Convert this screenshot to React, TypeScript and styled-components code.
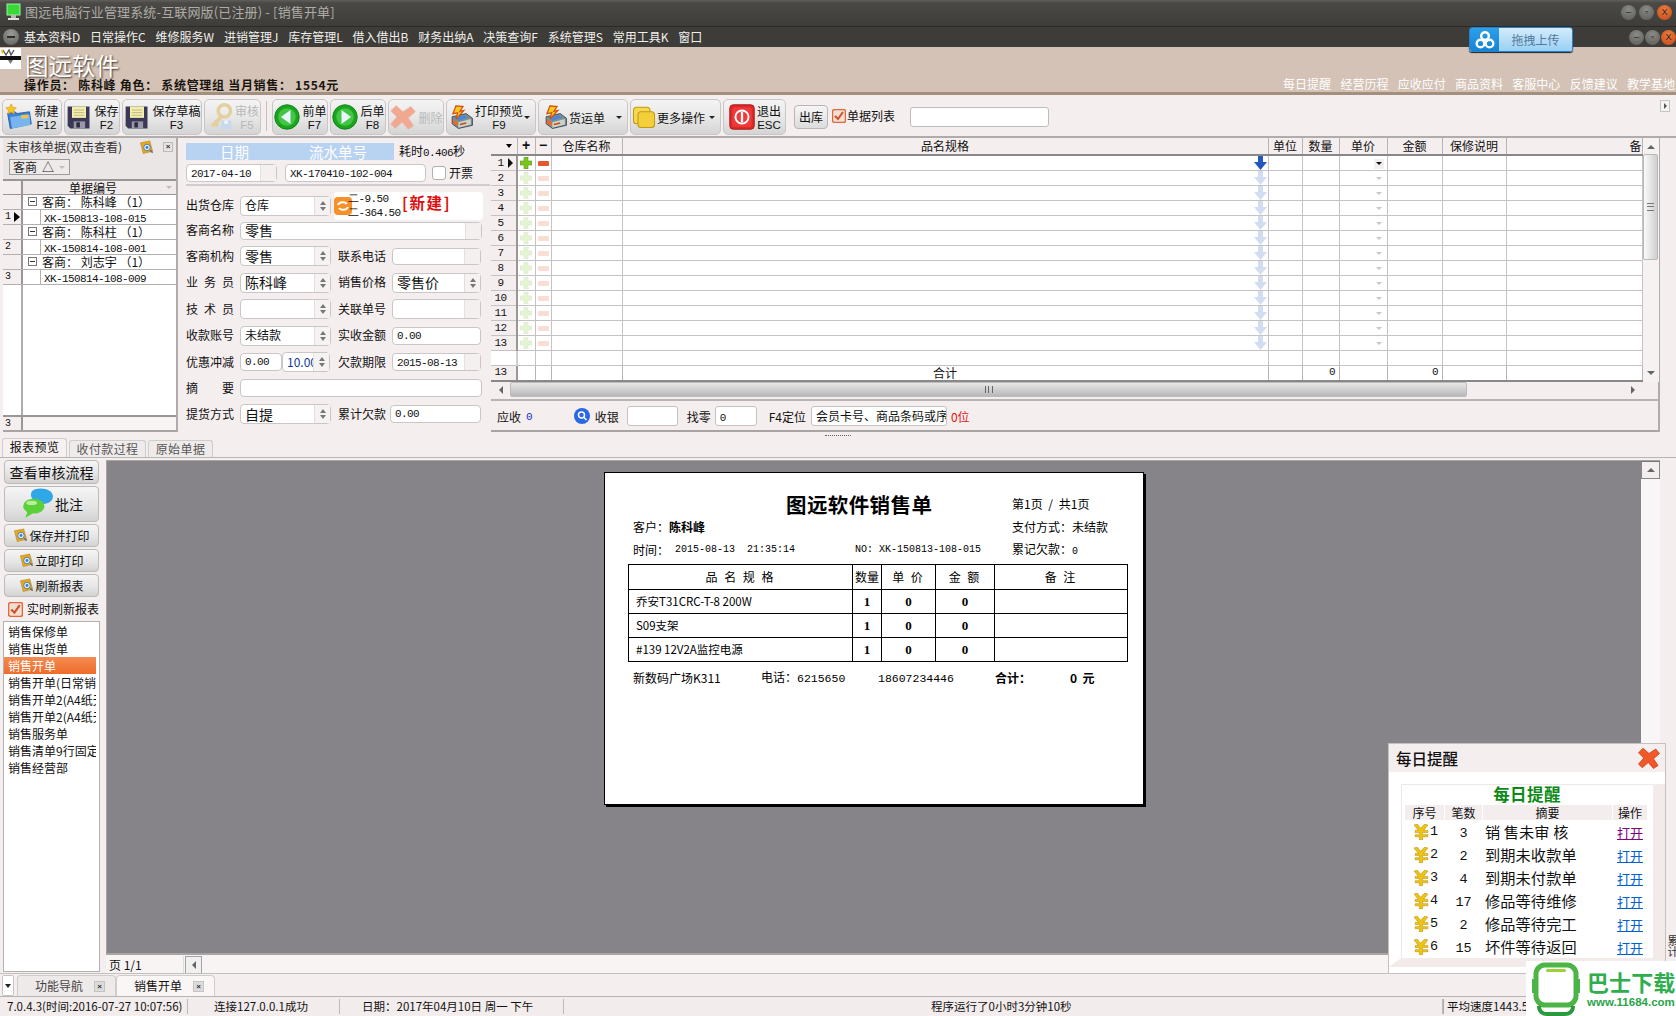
import React from 'react';
import styled, { createGlobalStyle } from 'styled-components';

const CJK = '"Noto Sans CJK SC", "Liberation Sans", sans-serif';
const MONO = '"Liberation Mono", "DejaVu Sans Mono", monospace';
const PANEL = '#f5eeee';

const Global = createGlobalStyle`
  html, body { margin: 0; padding: 0; background: ${PANEL}; }
  * { box-sizing: border-box; }
  body { font: 12px/1.2 ${CJK}; color: #111; }
`;

const Root = styled.div`
  position: relative; width: 1676px; height: 1016px; overflow: hidden;
  display: flex; flex-direction: column; background: ${PANEL};
`;

/* ---------- window chrome ---------- */
const TitleBar = styled.div`
  height: 27px; display: flex; align-items: center; padding: 0 3px 2px 6px; gap: 4px;
  background: linear-gradient(#5f5e5a 0, #4a4946 3px, #3e3d39 100%); border-bottom: 1px solid #2c2b28;
`;
const TitleText = styled.div`flex: 1; color: #aeaca6; font-size: 13px; letter-spacing: 0.15px; white-space: nowrap;`;
const MenuBar = styled.div`
  height: 20px; display: flex; align-items: center; padding: 0 0 0 3px; background: #3d3c38; position: relative;
`;
const MenuDot = styled.span`
  width: 16px; height: 16px; border-radius: 50%; margin-right: 5px;
  background: radial-gradient(circle at 50% 30%, #9a9a96, #5c5c58); display: inline-flex; align-items: center; justify-content: center;
  &::after { content: ''; width: 8px; height: 2px; background: #2e2e2c; }
`;
const MenuItem = styled.span`color: #f1f0ec; font-size: 12px; margin-right: 9.8px; white-space: nowrap;`;
const MenuFill = styled.div`flex: 1;`;
const WinButtons = styled.div<{ $mr: number; $gap: number }>`display: flex; gap: ${(p) => p.$gap}px; margin-right: ${(p) => p.$mr}px;`;
const WinBtn = styled.span<{ $close?: boolean }>`
  width: 15px; height: 15px; border-radius: 50%; color: #26262a; font-size: 9px; display: flex; align-items: center; justify-content: center;
  font-family: "Liberation Sans", sans-serif;
  background: ${(p) => (p.$close ? 'radial-gradient(circle at 50% 30%, #ee7a3c, #c24a1a)' : 'radial-gradient(circle at 50% 30%, #8a8a86, #5a5a56)')};
`;

const Header = styled.div`
  height: 48px; display: flex; justify-content: space-between; background: #d3c2b5;
  border-bottom: 3px solid #a28f7e;
`;
const Logo = styled.div`width: 21px; height: 21px; margin: 1px 3px 0 0; background: #fff;`;
const Brand = styled.div`display: flex; flex-direction: column; flex: 1; padding-top: 5px;`;
const BrandName = styled.div`
  color: #fff; font-size: 23.5px; line-height: 27px; letter-spacing: 0; margin-left: 1px;
  text-shadow: 1px 1px 2px #3a3028;
`;
const Operator = styled.div`font-size: 12px; font-weight: 700; color: #181410; line-height: 14px; margin-top: -1px; letter-spacing: 0.7px;`;
const HeadLeft = styled.div`display: flex;`;
const HeadLinks = styled.div`display: flex; gap: 9.3px; align-items: flex-end; margin: 0 1px -1px 0;`;
const HeadLink = styled.span`color: #fff; font-size: 12px; line-height: 18px;`;

/* ---------- toolbar ---------- */
const Toolbar = styled.div`
  height: 41px; flex: none; display: flex; align-items: flex-start; gap: 2px; padding: 4px 0 0 2px; background: ${PANEL}; position: relative;
`;
const ToolBtn = styled.div<{ $w: number; $off?: boolean; $pl?: number }>`
  width: ${(p) => p.$w}px; height: 36px; flex: none; display: flex; align-items: center; justify-content: ${(p) => (p.$pl !== undefined ? 'flex-start' : 'center')}; gap: 1px;
  padding-left: ${(p) => p.$pl ?? 0}px;
  border: 1px solid #c8c6c6; border-radius: 5px; position: relative;
  background: linear-gradient(#f4f4f4, #e8e8e8 50%, #d4d4d4);
  color: ${(p) => (p.$off ? '#b8b8b8' : '#111')};
`;
const ToolText = styled.div`display: flex; flex-direction: column; align-items: center; line-height: 15px; white-space: nowrap;`;
const ToolKey = styled.span`font: 11.5px/14px "Liberation Sans", sans-serif;`;
const Caret = styled.span`
  position: absolute; right: 5px; top: 16px; width: 0; height: 0;
  border-left: 3px solid transparent; border-right: 3px solid transparent; border-top: 3px solid #222;
`;
const ToolSep = styled.span`width: 1px; height: 30px; background: #c4c0c0; margin: 2px 3px 0;`;
const SmallBtn = styled.div`
  width: 34px; height: 24px; margin: 6px 2px 0 6px; border: 1px solid #b8b6b6; border-radius: 4px; display: flex; align-items: center; justify-content: center;
  background: linear-gradient(#f6f6f6, #dcdcdc); flex: none;
`;
const CheckRow = styled.label`display: flex; align-items: center; gap: 1px; white-space: nowrap;`;
const ToolCheck = styled(CheckRow)`margin-top: 10px;`;
const ToolSearch = styled.div`
  width: 139px; height: 20px; margin: 8px 0 0 13px; background: #fff; border: 1px solid #bdbdbd; border-radius: 3px;
`;
const CornerBtn = styled.span`
  position: absolute; right: 6px; top: 5px; width: 10px; height: 12px; border: 1px solid #c4c4c4; background: #f4f4f4;
  &::after { content: ''; position: absolute; left: 3px; top: 2px; border-left: 3px solid #555; border-top: 3px solid transparent; border-bottom: 3px solid transparent; }
`;

/* ---------- main split ---------- */
const Main = styled.div`height: 296px; display: flex; flex: none; background: ${PANEL}; border-top: 2px solid #b0acac;`;

const LeftPanel = styled.div`
  width: 175px; margin-left: 3px; display: flex; flex-direction: column; height: 294px;
  border-bottom: 2px solid #a8a4a4; border-right: 2px solid #b0acac;
`;
const LeftTitle = styled.div`height: 20px; display: flex; align-items: center; color: #333; padding: 0 3px 2px 3px; background: #ebe6e6;`;
const Grow = styled.span`flex: 1;`;
const TinyClose = styled.span`
  width: 10px; height: 10px; margin-left: 9px; border: 1px solid #bbb; background: #e8e4e4; color: #333; font: 700 8px/8px "Liberation Sans", sans-serif; text-align: center;
`;
const FilterRow = styled.div`height: 21px; padding: 1px 0 0 6px; background: #ebe6e6;`;
const FilterChip = styled.div`
  width: 61px; height: 16px; border: 1px solid #9c9c9c; background: #eeeaea; display: flex; align-items: center; gap: 5px; padding-left: 3px; line-height: 12px;
  color: #222; font-size: 12px; white-space: nowrap;
`;
const GrayTri = styled.span`
  width: 0; height: 0; flex: none; border-left: 3px solid transparent; border-right: 3px solid transparent; border-top: 3px solid #c0bcbc;
`;
const ListHead = styled.div`
  height: 16px; display: flex; border-top: 2px solid #9a9696; border-bottom: 1px solid #9a9696; background: #f0eaea;
  line-height: 13px;
`;
const ListGutter = styled.div`
  width: 20px; flex: none; border-right: 2px solid #9a9696; background: ${PANEL}; font-size: 10px; display: flex; align-items: center; gap: 3px; padding-left: 2px;
  font-family: ${MONO};
`;
const ListHeadText = styled.div`flex: 1; display: flex; align-items: center; padding: 0 4px 0 46px; justify-content: space-between;`;
const TreeRow = styled.div`height: 15px; display: flex; background: #fff; border-bottom: 1px solid #b4b0b0;`;
const TreeBox = styled.span`
  width: 9px; height: 9px; border: 1px solid #777; margin: 2px 5px 0 5px; position: relative; flex: none; background: #fff;
  &::after { content: ''; position: absolute; left: 1px; top: 3px; width: 5px; height: 1px; background: #333; }
`;
const TreeText = styled.span`white-space: nowrap; line-height: 14px; font-size: 12px;`;
const Mono = styled.span<{ $s?: number }>`font: ${(p) => p.$s ?? 11}px/14px ${MONO}; letter-spacing: ${(p) => ((p.$s ?? 11) === 11 ? -0.6 : 0)}px; white-space: nowrap;`;
const TreeItem = styled.div`
  margin-left: 17px; flex: 1; padding-left: 3px; border-left: 1px solid #b4b0b0; line-height: 14px;
`;
const ListFill = styled.div`flex: 1; display: flex; background: #fff;`;
const ListFillGutter = styled.div`width: 20px; border-right: 2px solid #b0acac; background: #fff;`;
const ListFoot = styled.div`
  height: 15px; display: flex; border-top: 2px solid #9a9696; background: #f8f4f4; line-height: 12px; font-size: 10px; font-family: ${MONO};
`;

/* ---------- form ---------- */
const Form = styled.div`width: 297px; margin-left: 8px; padding-top: 5px; flex: none;`;
const BandRow = styled.div`display: flex; align-items: flex-end; gap: 5px; height: 17px;`;
const Band = styled.div`
  width: 208px; height: 17px; background: #b8d2f2; color: #fff; font-size: 14.5px; line-height: 17px; display: flex; padding-left: 34px; gap: 60px;
`;
const Spent = styled.span`white-space: nowrap;`;
const DateRow = styled.div`
  display: flex; gap: 8px; align-items: center; height: 26px; padding-bottom: 1px; border-bottom: 2px solid #d0ccd0; margin-bottom: 7px; padding-top: 3px; width: 304px;
`;
const Field = styled.div<{ $w: number; $h?: number; $fs?: number; $ml?: number }>`
  width: ${(p) => p.$w}px; height: ${(p) => p.$h ?? 19}px; flex: none; background: #fff; border: 1px solid #c8c6c6; border-radius: 4px;
  display: flex; align-items: center; padding-left: 4px; position: relative; white-space: nowrap;
  font-size: ${(p) => p.$fs ?? 12}px; margin-left: ${(p) => p.$ml ?? 0}px;
`;
const FieldText = styled.span`flex: 1; line-height: 1.2;`;
const ClipValue = styled.span`flex: 1; color: #0e3a98; font-size: 12px; line-height: 1.5; overflow: hidden;`;
const Spinner = styled.span`
  width: 16px; align-self: stretch; flex: none; border-left: 1px solid #e0dede; background: #f6f2f2; display: flex; flex-direction: column; align-items: center; justify-content: center; gap: 2px;
  &::before { content: ''; border-left: 3px solid transparent; border-right: 3px solid transparent; border-bottom: 4px solid #777; }
  &::after { content: ''; border-left: 3px solid transparent; border-right: 3px solid transparent; border-top: 4px solid #777; }
`;
const DropCap = styled.span`width: 16px; align-self: stretch; flex: none; border-left: 1px solid #e4e0e0; background: #f4f0f0;`;
const CheckSq = styled.span`width: 14px; height: 14px; flex: none; background: #fff; border: 1px solid #b0aeae; border-radius: 3px; margin-left: -2px;`;
const InvoiceText = styled.span`margin-left: -5px;`;
const FormRow = styled.div<{ $h: number }>`height: ${(p) => p.$h}px; display: flex; align-items: center; position: relative;`;
const Label = styled.span<{ $ml?: number; $w?: number }>`
  width: ${(p) => p.$w ?? 48}px; flex: none; text-align-last: justify; font-size: 12px; margin-left: ${(p) => p.$ml ?? 0}px; margin-right: 6px; white-space: nowrap;
`;
const InfoBox = styled.div`
  width: 149px; height: 28px; margin-left: 3px; background: #fff; border-radius: 4px; display: flex; align-items: center; position: relative; padding-left: 0;
`;
const InfoLines = styled.div`display: flex; flex-direction: column; margin-left: -4px; line-height: 13px; position: relative;`;
const NewTag = styled.span`
  color: #e01010; font-size: 15.5px; font-weight: 700; position: absolute; left: 68px; top: 1px; white-space: nowrap; letter-spacing: 1.6px;
`;

/* ---------- line-item grid ---------- */
const GridColumn = styled.div`width: 1169px; margin-left: 8px; flex: none; border-right: 2px solid #b0acac; height: 294px; display: flex; flex-direction: column;`;
const GridWrap = styled.div`display: flex; height: 244px; flex: none;`;
const GridTable = styled.table`
  border-collapse: collapse; table-layout: fixed; width: 1151px; height: 242px; flex: none; background: #fff;
  th, td { padding: 0; white-space: nowrap; }
  td { overflow: hidden; }
  thead th { height: 17px; font-weight: 400; text-align: center; background: ${PANEL}; border-right: 1px solid #b8b4b4; border-bottom: 2px solid #888; line-height: 15px; font-size: 12px; vertical-align: top; }
  tbody td { height: 15px; border-right: 1px solid #c4c2c2; border-bottom: 1px solid #c4c2c2; line-height: 13px; position: relative; }
  tfoot td { height: 15px; border-right: 1px solid #b8b4b4; border-top: 1px solid #888; border-bottom: 2px solid #888; line-height: 13px; background: #fff; text-align: center; overflow: visible; }
`;
const HeadSort = styled.svg`display: block; margin-left: 14px;`;
const HeadSign = styled.th`&& { font: 700 14px/15px "Liberation Sans", sans-serif; }`;
const HeadRight = styled.th`&& { text-align: right; overflow: hidden; }`;
const RowNum = styled.td<{ $blank?: boolean }>`
  && { background: ${(p) => (p.$blank ? '#fff' : PANEL)}; border-right: 2px solid ${(p) => (p.$blank ? '#d0d0d0' : '#9a9696')}; font: 11px/13px ${MONO}; text-align: center; letter-spacing: -0.5px; padding-right: 6px; }
`;
const Arrow = styled.span`
  position: absolute; right: 3px; top: 2px; border-left: 5px solid #111; border-top: 5px solid transparent; border-bottom: 5px solid transparent;
`;
const CellIcon = styled.span<{ $faded?: boolean }>`
  display: flex; justify-content: center; align-items: center; height: 14px; opacity: ${(p) => (p.$faded ? 0.2 : 1)};
`;
const CellRightIcon = styled(CellIcon)`justify-content: flex-end; padding-right: 1px;`;
const TotalNum = styled.td`&& { text-align: right; padding-right: 3px; font: 11px/13px ${MONO}; }`;
const DropTri = styled.span<{ $faded?: boolean }>`
  position: absolute; right: 3px; top: 3px; width: 10px; height: 10px; display: flex; justify-content: center; padding-top: 3px;
  background: ${(p) => (p.$faded ? 'transparent' : '#f2f0f0')};
  &::after { content: ''; height: 0; border-left: 3px solid transparent; border-right: 3px solid transparent; border-top: 3px solid ${(p) => (p.$faded ? '#c8c8c8' : '#111')}; }
`;
const VScroll = styled.div`width: 16px; flex: none; background: #f6f2f2; display: flex; flex-direction: column; align-items: center; position: relative;`;
const ThumbV = styled.div`
  width: 15px; height: 106px; flex: none; border: 1px solid #b8b8b8; border-radius: 2px; background: linear-gradient(90deg, #fafafa, #cfcfcf);
  display: flex; align-items: center; justify-content: center;
`;
const Grip = styled.span`width: 7px; height: 8px; border-top: 1px solid #777; border-bottom: 1px solid #777; position: relative;
  &::after { content: ''; position: absolute; left: 0; right: 0; top: 2px; height: 1px; background: #777; }
`;
const TriUp = styled.span<{ $m?: string }>`width: 0; height: 0; margin: ${(p) => p.$m ?? '7px 0 5px'}; border-left: 4px solid transparent; border-right: 4px solid transparent; border-bottom: 4px solid #666;`;
const TriDown = styled.span`width: 0; height: 0; margin: auto 0 7px; border-left: 4px solid transparent; border-right: 4px solid transparent; border-top: 4px solid #666;`;
const HScroll = styled.div`height: 15px; flex: none; display: flex; align-items: center; width: 1151px;`;
const HArrow = styled.span<{ $dir: 'l' | 'r' }>`
  width: 19px; height: 15px; flex: none; display: flex; align-items: center; justify-content: center;
  &::after { content: ''; border-top: 4px solid transparent; border-bottom: 4px solid transparent; ${(p) => (p.$dir === 'l' ? 'border-right: 4px solid #666;' : 'border-left: 4px solid #666;')} }
`;
const ThumbH = styled.div`
  width: 957px; height: 15px; flex: none; border: 1px solid #bbb; border-radius: 2px; background: linear-gradient(#e8e8e8, #c6c6c8 70%, #b8b8ba);
  display: flex; align-items: center; justify-content: center;
`;
const GripH = styled.span`width: 8px; height: 7px; border-left: 1px solid #666; border-right: 1px solid #666; position: relative;
  &::after { content: ''; position: absolute; left: 2px; top: 0; bottom: 0; width: 1px; background: #666; }
`;
const Foot = styled.div`
  height: 33px; margin-top: 2px; flex: none; display: flex; align-items: center; border-top: 2px solid #b8b4b4; border-bottom: 2px solid #a8a4a4; padding-top: 1px;
`;
const FootText = styled.span<{ $ml?: number; $c?: string; $fs?: number }>`
  margin: 3px 0 0 ${(p) => p.$ml ?? 0}px; color: ${(p) => p.$c ?? '#111'}; white-space: nowrap; font-size: ${(p) => p.$fs ?? 12}px;
`;
const FootZero = styled(FootText)`font-family: ${MONO}; font-size: 11px;`;
const FootIcon = styled(FootText)`display: flex; margin-top: 0;`;
const FootInput = styled.div<{ $w: number; $ml: number }>`
  width: ${(p) => p.$w}px; margin-left: ${(p) => p.$ml}px; height: 20px; background: #fff; border: 1px solid #c4c2c2; border-radius: 3px; padding-left: 4px; line-height: 18px; overflow: hidden; white-space: nowrap; flex: none;
`;

/* ---------- lower pane ---------- */
const Splitter = styled.div`height: 7px; flex: none; display: flex; align-items: center; justify-content: center;`;
const SplitDots = styled.span`width: 26px; height: 0; border-top: 1px dotted #666;`;
const PaneTabs = styled.div`height: 19px; display: flex; padding-left: 2px; gap: 2px; align-items: flex-end; flex: none; border-bottom: 1px solid #b8b4b4;`;
const PaneTab = styled.div<{ $w: number; $on?: boolean }>`
  width: ${(p) => p.$w}px; height: ${(p) => (p.$on ? 19 : 17)}px; text-align: center; border: 1px solid #cfcccc; border-bottom: none; border-radius: 3px 3px 0 0; line-height: 16px;
  color: ${(p) => (p.$on ? '#111' : '#555')}; background: ${(p) => (p.$on ? '#f6f0f0' : '#f0ebeb')}; letter-spacing: 0.4px;
`;
const PaneBody = styled.div`height: 515px; display: flex; flex: none;`;
const Side = styled.div`width: 106px; flex: none; display: flex; flex-direction: column; padding: 2px 0 0 4px; position: relative;`;
const SideBtn = styled.div<{ $h: number; $mb?: number; $fs?: number }>`
  width: 95px; height: ${(p) => p.$h}px; margin-bottom: ${(p) => p.$mb ?? 2}px; border: 1px solid #bdbaba; border-radius: 4px; flex: none;
  background: linear-gradient(#f5f5f5, #e4e4e4 60%, #d2d2d2); display: flex; align-items: center; justify-content: center; gap: 1px; white-space: nowrap;
  font-size: ${(p) => p.$fs ?? 12}px; line-height: 1;
`;
const SideCheck = styled(CheckRow)`height: 20px; margin: 2px 0 2px 4px; gap: 4px; font-size: 12px;`;
const ReportList = styled.div`
  width: 97px; height: 351px; margin-left: -1px; background: #fff; border: 1px solid #b4b0b0; padding: 1px 3px 0 0; overflow: hidden; flex: none;
`;
const ReportItem = styled.div<{ $on?: boolean }>`
  height: 17px; line-height: 17px; padding-left: 4px; white-space: nowrap; overflow: hidden; font-size: 12px; position: relative;
  ${(p) => (p.$on ? 'background: linear-gradient(#f58a50, #ee6c2c); color: #fff;' : '')}
`;
const ReportColumn = styled.div`flex: 1; display: flex; flex-direction: column; margin-right: 16px;`;
const ReportRow = styled.div`height: 495px; display: flex; flex: none; margin-top: 2px; border: 1px solid #a8a4a4; border-bottom: 2px solid #a8a4a4; border-right: none;`;
const ReportArea = styled.div`flex: 1; background: #868488; display: flex; justify-content: center; padding-top: 11px; position: relative;`;
const ReportScroll = styled.div`width: 19px; flex: none; display: flex; flex-direction: column; background: #f8f6f6;`;
const ScrollCap = styled.span`height: 18px; display: flex; justify-content: center; align-items: center; background: ${PANEL}; border: 1px solid #888; border-top-color: #777;`;
const Pager = styled.div`height: 19px; display: flex; align-items: center; flex: none; background: #f8f4f4;`;
const PagerText = styled.div`width: 78px; padding-left: 3px; height: 17px; line-height: 17px; border-right: 1px solid #ddd;`;
const PagerBtn = styled.span`width: 17px; height: 18px; margin-left: 1px; border: 1px solid #a4a4a4; background: #f0f0f0; display: flex; align-items: center; justify-content: center;
  &::after { content: ''; border-top: 4px solid transparent; border-bottom: 4px solid transparent; border-right: 4px solid #666; }
`;

/* printed page */
const Page = styled.div`
  width: 540px; height: 333px; background: #fff; border: 1px solid #000; box-shadow: 2px 2px 0 #000; padding: 19px 0 0 28px; color: #000; flex: none;
`;
const PageTop = styled.div`display: flex; height: 24px; align-items: center;`;
const PageTitle = styled.div`font-size: 20.5px; font-weight: 700; width: 379px; padding-left: 153px; letter-spacing: 0.4px; line-height: 24px; white-space: nowrap;`;
const PageNo = styled.span`word-spacing: 3px;`;
const PageInfo = styled.div`display: flex; height: 23px; align-items: center;`;
const PageLeft = styled.div`width: 379px; display: flex; align-items: center; white-space: nowrap;`;
const PageMono = styled.span<{ $ml?: number; $w?: number; $s?: number }>`font: ${(p) => p.$s ?? 10}px/14px ${MONO}; margin-left: ${(p) => p.$ml ?? 0}px; ${(p) => (p.$w ? `width:${p.$w}px;` : '')} white-space: nowrap;`;
const PrintTable = styled.table`
  width: 500px; margin: 2px 0 0 -5px; border-collapse: collapse; table-layout: fixed; border: 1px solid #000;
  td { border: 1px solid #000; height: 24px; text-align: center; padding: 0; font-size: 12px; white-space: nowrap; overflow: hidden; }
`;
const PrintHeadRow = styled.tr`height: 25px; letter-spacing: 2px;`;
const PrintQtyHead = styled.td`&& { letter-spacing: 0; }`;
const PrintName = styled.td`&& { text-align: left; padding-left: 7px; font-size: 11.5px; }`;
const PrintVal = styled.td`&& { font: 700 13px "Liberation Serif", serif; }`;
const PageFoot = styled.div`display: flex; align-items: center; height: 32px; white-space: nowrap;`;
const PageFootCell = styled.span<{ $w: number; $b?: boolean }>`width: ${(p) => p.$w}px; flex: none; ${(p) => (p.$b ? 'font-weight:700;' : '')}`;

/* ---------- doc tabs + status ---------- */
const DocTabs = styled.div`height: 24px; flex: none; display: flex; align-items: flex-end; padding-left: 2px; border-top: 1px solid #c4c0c0; border-bottom: 1px solid #b8b4b4;`;
const DocDrop = styled.span`width: 12px; height: 21px; border: 1px solid #c8c4c4; background: #fff; border-radius: 2px; margin-right: 3px; display: flex; align-items: center; justify-content: center;
  &::after { content: ''; border-left: 3px solid transparent; border-right: 3px solid transparent; border-top: 4px solid #222; }
`;
const DocTab = styled.div<{ $on?: boolean }>`
  width: 99px; height: 21px; display: flex; align-items: center; padding: 0 10px 0 17px; justify-content: space-between; border: 1px solid #cfcccc; border-bottom: none; border-radius: 4px 4px 0 0;
  background: ${(p) => (p.$on ? '#faf6f6' : '#efeaea')}; color: ${(p) => (p.$on ? '#111' : '#444')}; font-size: 12px;
`;
const DocClose = styled.span`width: 11px; height: 11px; background: #dcdcdc; border: 1px solid #c4c4c4; font: 700 8px/9px "Liberation Sans", sans-serif; text-align: center; color: #333;`;
const Status = styled.div`height: 18px; flex: none; display: flex; align-items: center; background: #f2ecec; white-space: nowrap; font-size: 11.5px;`;
const StatusCell = styled.div<{ $w: number; $pl?: number }>`width: ${(p) => p.$w}px; padding-left: ${(p) => p.$pl ?? 0}px; border-right: 1px solid #bbb; height: 15px; line-height: 15px; flex: none;`;
const StatusEnd = styled.div`padding-left: 3px; border-left: 1px solid #aaa; height: 15px; line-height: 15px;`;

/* ---------- overlays ---------- */
const UploadBadge = styled.div`
  position: absolute; left: 1469px; top: 27px; width: 104px; height: 25px; display: flex; border: 1px solid #2a80c8; border-radius: 3px; overflow: hidden; box-shadow: 0 1px 1px #222;
`;
const UploadIcon = styled.div`width: 29px; background: linear-gradient(#2e9fea, #1584d4); display: flex; align-items: center; justify-content: center;`;
const UploadText = styled.div`flex: 1; background: linear-gradient(#d4ecfb, #98d0f4); color: #55799a; text-align: center; line-height: 23px; font-size: 12px;`;
const Reminder = styled.div`
  position: absolute; left: 1388px; top: 743px; width: 278px; height: 231px; border: 1px solid #c4c0c0; background: #fff; display: flex; flex-direction: column;
`;
const ReminderHead = styled.div`height: 28px; background: ${PANEL}; display: flex; align-items: center; justify-content: space-between; padding: 0 4px 0 7px; font-size: 15.5px; font-weight: 500; color: #111; flex: none;`;
const ReminderFrame = styled.div`
  margin: 12px 0 7px 0; flex: 1; border-left: 12px solid #fff; border-right: 12px solid #f3eaea; border-bottom: 9px solid #f3eaea; padding: 0 3px 0 3px; background: #fff; box-shadow: inset 0 1px 0 #efe8e8, inset 1px 0 0 #efe8e8;
`;
const ReminderTitle = styled.div`text-align: center; color: #0a8a14; font-size: 16.5px; font-weight: 700; line-height: 21px; letter-spacing: 0.4px;`;
const ReminderTable = styled.table`
  width: 244px; border-collapse: separate; border-spacing: 1px 0; table-layout: fixed;
  th { background: #f3eded; font-weight: 400; font-size: 12px; height: 15px; line-height: 14px; padding: 0; }
  td { height: 23px; padding: 0; font-size: 15.2px; text-align: center; white-space: nowrap; line-height: 1; }
`;
const ReminderSeq = styled.td`&& { padding-left: 2px; }`;
const SeqInner = styled.span`display: flex; align-items: center; justify-content: center; gap: 0; font: 13.5px ${MONO};`;
const ReminderDesc = styled.td`&& { text-align: left; padding-left: 2px; letter-spacing: 0.1px; }`;
const OpenLink = styled.span<{ $v?: boolean }>`color: ${(p) => (p.$v ? '#800080' : '#0060d0')}; text-decoration: underline; font-size: 13px;`;
const SideTextClip = styled.div`
  position: absolute; left: 1666px; top: 935px; width: 12px; color: #333; font-size: 11px; line-height: 11px; writing-mode: vertical-rl;
`;
const Watermark = styled.div`
  position: absolute; left: 1526px; top: 961px; width: 150px; height: 55px; background: #fff; display: flex; align-items: center; padding-left: 5px;
`;
const WmText = styled.div`margin-left: 6px; display: flex; flex-direction: column; color: #2fae4e; line-height: 1;`;
const WmBig = styled.span`font-size: 22px; font-weight: 700; letter-spacing: 0.1px; white-space: nowrap;`;
const WmSmall = styled.span`font: 700 11.5px "Liberation Sans", sans-serif; margin-top: 4px; color: #2aa548;`;

/* ---------- icons ---------- */
const Ico = ({ s = 28, children }: { s?: number; children: React.ReactNode }) => (
  <svg width={s} height={s} viewBox="0 0 32 32" style={{ flex: 'none' }}>{children}</svg>
);
const FolderStar = () => (
  <Ico><path d="M3 12l8-2 3 2 14-2 2 14-24 5z" fill="#3b82d8" stroke="#2458a0" /><path d="M6 16l22-3 1 12-21 4z" fill="#78b4ee" /><path d="M18 14l8-1 1 4-8 1z" fill="#ecc64a" /><path d="M7 1l2 4 4 .5-3 3 1 4-4-2-4 2 1-4-3-3 4-.5z" fill="#f6c81e" stroke="#d88a10" strokeWidth=".6" /></Ico>
);
const Floppy = () => (
  <Ico><path d="M3 4h25v25H6l-3-3z" fill="#3a3854" /><path d="M8 4h16v13H8z" fill="#f4efb0" /><path d="M10 8h12M10 11h12M10 14h12" stroke="#b8b07a" /><path d="M10 21h13v8H10z" fill="#9a98a8" /><path d="M13 22h4v6h-4z" fill="#2c2a40" /></Ico>
);
const KeyIcon = () => (
  <Ico><circle cx="21" cy="9" r="7" fill="none" stroke="#e4cfa0" strokeWidth="4" /><path d="M16 14L5 25l3 3 2-2 2 2 3-3-1-2 5-6" fill="#e4cfa0" /><path d="M17 20h12v10H17z" fill="#c8d8ee" /><path d="M21 20h4v4h-4z" fill="#eef4fb" /></Ico>
);
const NavArrow = ({ dir }: { dir: 'l' | 'r' }) => (
  <Ico><circle cx="16" cy="16" r="14" fill="#1aa51e" stroke="#0e7c12" /><circle cx="16" cy="16" r="10" fill="#44c644" /><path d={dir === 'l' ? 'M20 8v16L9 16z' : 'M12 8v16l11-8z'} fill="#e8f6ff" /></Ico>
);
const RedX = ({ s = 28, faded }: { s?: number; faded?: boolean }) => (
  <Ico s={s}><path d="M8 3l8 7 9-6 5 6-8 7 6 9-6 4-7-8-8 7-5-5 7-8L2 9z" fill={faded ? '#f0a890' : '#f0582a'} stroke={faded ? '#e8b8a8' : '#c83c10'} /></Ico>
);
const PrinterIcon = () => (
  <Ico s={25}><path d="M4 15l18-4 8 6v9L12 30 4 24z" fill="#7f9090" stroke="#334" /><path d="M7 16l12-3 6 3-13 4z" fill="#4a86d8" /><path d="M12 22l16-4v7l-16 4z" fill="#c8d4c8" /><path d="M9 1l9 1-4 6 5-1-10 11 2-8-6 1z" fill="#f8c820" stroke="#d4500a" strokeWidth="1.6" /><path d="M14 25l8-2" stroke="#d04818" strokeWidth="2" /><path d="M5 19l6 2v6l-6-3z" fill="#e86a28" /></Ico>
);
const NotesIcon = () => (
  <Ico s={24}><rect x="2" y="3" width="22" height="22" rx="4" fill="#f6d850" stroke="#c09a10" strokeWidth="1.4" /><rect x="8" y="9" width="22" height="21" rx="4" fill="#f4cf3c" stroke="#c09a10" strokeWidth="1.4" /></Ico>
);
const ExitIcon = () => (
  <Ico><rect x="2" y="2" width="28" height="28" rx="4" fill="#e02828" stroke="#a01414" /><rect x="5" y="5" width="22" height="22" rx="2" fill="#f03a3a" /><circle cx="16" cy="16" r="7.5" fill="none" stroke="#fff" strokeWidth="2.2" /><path d="M16 10v12" stroke="#fff" strokeWidth="2.6" /></Ico>
);
const CameraIcon = ({ s = 15 }: { s?: number }) => (
  <Ico s={s}><path d="M3 6l20-4 6 22-20 5z" fill="#eaa818" stroke="#a8760c" /><circle cx="17" cy="16" r="7" fill="#dff0ff" stroke="#4a78a8" strokeWidth="2" /><circle cx="17" cy="16" r="3" fill="#3a78d8" /><path d="M24 22l5 5" stroke="#667" strokeWidth="3" /></Ico>
);
const Chat = () => (
  <Ico s={34}><path d="M14 2c9-2 17 1 17 7 0 4-4 7-9 7l-1 3-3-4C11 14 7 5 14 2z" fill="#30a8e8" /><ellipse cx="13" cy="18" rx="10" ry="7" fill="#5cd038" /><path d="M7 23l-2 6 7-4z" fill="#5cd038" /><ellipse cx="11" cy="15" rx="5" ry="2" fill="#b6f09a" /></Ico>
);
const CheckBox = ({ s = 14 }: { s?: number }) => (
  <svg width={s} height={s} viewBox="0 0 14 14" style={{ flex: 'none' }}><rect x=".5" y=".5" width="13" height="13" rx="2" fill="#f2dfd2" stroke="#e0683a" strokeWidth="1.4" /><path d="M3 7l3 3 5-7" fill="none" stroke="#d0502a" strokeWidth="2" /></svg>
);
const Plus = () => (
  <svg width="12" height="12" viewBox="0 0 12 12"><path d="M4 0h4v4h4v4H8v4H4V8H0V4h4z" fill="#7cc420" stroke="#5a9a14" strokeWidth=".6" /></svg>
);
const Minus = () => (
  <svg width="11" height="5" viewBox="0 0 11 5"><rect width="11" height="5" rx="1" fill="#e8582a" /></svg>
);
const DownBlue = () => (
  <svg width="13" height="14" viewBox="0 0 13 14"><path d="M4 0h5v6h4l-6.5 8L0 6h4z" fill="#2458c0" /></svg>
);
const Coin = () => (
  <svg width="17" height="16" viewBox="0 0 16 15" style={{ flex: 'none' }}><path d="M1 1l3-1 3 4 4-4 3 1-4 5h4v2h-5v2h5v2H9v3H6v-3H2v-2h4V8H2V6h3z" fill="#eec414" stroke="#b88c08" strokeWidth=".5" /></svg>
);
const SyncBox = () => (
  <svg width="18" height="18" viewBox="0 0 18 18" style={{ flex: 'none' }}><rect width="18" height="18" rx="4" fill="#f89028" /><path d="M4 8a5 4 0 019-1M14 10a5 4 0 01-9 1" fill="none" stroke="#fff" strokeWidth="2" /></svg>
);
const SearchDisc = () => (
  <svg width="16" height="16" viewBox="0 0 16 16" style={{ flex: 'none' }}><circle cx="8" cy="8" r="8" fill="#2a68e0" /><circle cx="7.5" cy="7" r="3" fill="none" stroke="#fff" strokeWidth="1.5" /><path d="M10 9.5l2.5 2.5" stroke="#fff" strokeWidth="1.6" /></svg>
);
const AppIcon = () => (
  <svg width="15" height="18" viewBox="0 0 15 18" style={{ flex: 'none' }}><rect x="1" y="1" width="13" height="11" fill="#38d838" stroke="#9ef09e" /><rect x="5" y="12" width="5" height="3" fill="#b8b8b8" /><rect x="2" y="15" width="11" height="2" fill="#e0e0e0" /></svg>
);
const LogoMark = () => (
  <svg width="21" height="21" viewBox="0 0 21 21"><path d="M3 2l3 5 3-5 2 5 3-5" fill="none" stroke="#555" strokeWidth="1.4" /><path d="M2 1l2 3-2 2-1-3z" fill="#f0c020" /><rect y="8" width="21" height="4" fill="#111" /><path d="M8 12h5l-2.5 4z" fill="#777" /></svg>
);
const UploadCloud = () => (
  <svg width="20" height="20" viewBox="0 0 20 20"><circle cx="10" cy="6" r="3.8" fill="none" stroke="#fff" strokeWidth="2.4" /><circle cx="5.5" cy="13.5" r="3.8" fill="none" stroke="#fff" strokeWidth="2.4" /><circle cx="14.5" cy="13.5" r="3.8" fill="none" stroke="#fff" strokeWidth="2.4" /></svg>
);
const WmLogo = () => (
  <svg width="50" height="54" viewBox="0 0 50 54" style={{ flex: 'none' }}><rect x="5" y="3" width="40" height="40" rx="9" fill="#fff" stroke="#4db548" strokeWidth="5" /><rect x="15" y="7" width="20" height="3" rx="1.5" fill="#9ad238" /><path d="M1 17h3v14H1zM46 17h3v14h-3z" fill="#4db548" /><path d="M8 44c0 6 4 8 8 8h18c4 0 8-2 8-8" fill="none" stroke="#2a9a3c" strokeWidth="4" /></svg>
);

/* ---------- data ---------- */
const MENUS: [string, string][] = [
  ['基本资料', 'D'], ['日常操作', 'C'], ['维修服务', 'W'], ['进销管理', 'J'], ['库存管理', 'L'], ['借入借出', 'B'],
  ['财务出纳', 'A'], ['决策查询', 'F'], ['系统管理', 'S'], ['常用工具', 'K'], ['窗口', ''],
];
const LINKS = ['每日提醒', '经营历程', '应收应付', '商品资料', '客服中心', '反馈建议', '教学基地'];
const COLS = [26, 18, 16, 71, 646, 34, 37, 48, 55, 64, 136];
const TREE = [
  ['客商： 陈科峰 （1）', 'XK-150813-108-015'],
  ['客商： 陈科柱 （1）', 'XK-150814-108-001'],
  ['客商： 刘志宇 （1）', 'XK-150814-108-009'],
];
const REPORTS = ['销售保修单', '销售出货单', '销售开单', '销售开单(日常销售单)', '销售开单2(A4纸无', '销售开单2(A4纸无', '销售服务单', '销售清单9行固定', '销售经营部'];
const REMIND: [string, string, string][] = [
  ['1', '3', '销 售未审 核'], ['2', '2', '到期未收款单'], ['3', '4', '到期未付款单'],
  ['4', '17', '修品等待维修'], ['5', '2', '修品等待完工'], ['6', '15', '坏件等待返回'],
];
const PRINT = ['乔安T31CRC-T-8 200W', 'S09支架', '#139 12V2A监控电源'];

const Select = ({ w, text, fs }: { w: number; text?: string; fs?: number }) => (
  <Field $w={w} $h={20} $fs={fs ?? 13}><FieldText>{text}</FieldText><Spinner /></Field>
);
const Drop = ({ w, text, fs, h }: { w: number; text?: string; fs?: number; h?: number }) => (
  <Field $w={w} $h={h ?? 20} $fs={fs}><FieldText>{text}</FieldText><DropCap /></Field>
);

export default function App() {
  return (
    <Root>
      <Global />
      <TitleBar>
        <AppIcon />
        <TitleText>图远电脑行业管理系统-互联网版(已注册) - [销售开单]</TitleText>
        <WinButtons $mr={1} $gap={3}><WinBtn>–</WinBtn><WinBtn>▫</WinBtn><WinBtn $close>X</WinBtn></WinButtons>
      </TitleBar>
      <MenuBar>
        <MenuDot />
        {MENUS.map(([a, b]) => <MenuItem key={a}>{a}{b}</MenuItem>)}
        <MenuFill />
        <WinButtons $mr={0} $gap={1}><WinBtn>–</WinBtn><WinBtn>▫</WinBtn><WinBtn $close>X</WinBtn></WinButtons>
      </MenuBar>
      <Header>
        <HeadLeft>
          <Logo><LogoMark /></Logo>
          <Brand>
            <BrandName>图远软件</BrandName>
            <Operator>操作员： 陈科峰 角色： 系统管理组 当月销售： 1554元</Operator>
          </Brand>
        </HeadLeft>
        <HeadLinks>{LINKS.map((l) => <HeadLink key={l}>{l}</HeadLink>)}</HeadLinks>
      </Header>
      <Toolbar>
        <ToolBtn $w={60}><FolderStar /><ToolText>新建<ToolKey>F12</ToolKey></ToolText></ToolBtn>
        <ToolBtn $w={56}><Floppy /><ToolText>保存<ToolKey>F2</ToolKey></ToolText></ToolBtn>
        <ToolBtn $w={80}><Floppy /><ToolText>保存草稿<ToolKey>F3</ToolKey></ToolText></ToolBtn>
        <ToolBtn $w={57} $off><KeyIcon /><ToolText>审核<ToolKey>F5</ToolKey></ToolText></ToolBtn>
        <ToolSep />
        <ToolBtn $w={56}><NavArrow dir="l" /><ToolText>前单<ToolKey>F7</ToolKey></ToolText></ToolBtn>
        <ToolBtn $w={56}><NavArrow dir="r" /><ToolText>后单<ToolKey>F8</ToolKey></ToolText></ToolBtn>
        <ToolBtn $w={56} $off><RedX faded /><ToolText>删除</ToolText></ToolBtn>
        <ToolBtn $w={90} $pl={2}><PrinterIcon /><ToolText>打印预览<ToolKey>F9</ToolKey></ToolText><Caret /></ToolBtn>
        <ToolBtn $w={90} $pl={4}><PrinterIcon /><ToolText>货运单</ToolText><Caret /></ToolBtn>
        <ToolBtn $w={91} $pl={1}><NotesIcon /><ToolText>更多操作</ToolText><Caret /></ToolBtn>
        <ToolBtn $w={63}><ExitIcon /><ToolText>退出<ToolKey>ESC</ToolKey></ToolText></ToolBtn>
        <SmallBtn>出库</SmallBtn>
        <ToolCheck><CheckBox />单据列表</ToolCheck>
        <ToolSearch />
        <CornerBtn />
      </Toolbar>

      <Main>
        <LeftPanel>
          <LeftTitle>未审核单据(双击查看)<Grow /><CameraIcon /><TinyClose>×</TinyClose></LeftTitle>
          <FilterRow><FilterChip>客商<span>△</span><GrayTri /></FilterChip></FilterRow>
          <ListHead><ListGutter /><ListHeadText>单据编号<GrayTri /></ListHeadText></ListHead>
          {TREE.map(([g, no], i) => (
            <React.Fragment key={no}>
              <TreeRow><ListGutter /><TreeBox /><TreeText>{g}</TreeText></TreeRow>
              <TreeRow>
                <ListGutter>{i + 1}{i === 0 && <svg width="6" height="10" viewBox="0 0 6 10"><path d="M0 0l6 5-6 5z" /></svg>}</ListGutter>
                <TreeItem><Mono>{no}</Mono></TreeItem>
              </TreeRow>
            </React.Fragment>
          ))}
          <ListFill><ListFillGutter /></ListFill>
          <ListFoot><ListGutter>3</ListGutter></ListFoot>
        </LeftPanel>

        <Form>
          <BandRow><Band><span>日期</span><span>流水单号</span></Band><Spent>耗时<Mono>0.406</Mono>秒</Spent></BandRow>
          <DateRow>
            <Field $w={91} $h={18}><FieldText><Mono>2017-04-10</Mono></FieldText><DropCap /></Field>
            <Field $w={141} $h={18}><FieldText><Mono>XK-170410-102-004</Mono></FieldText></Field>
            <CheckSq />
            <InvoiceText>开票</InvoiceText>
          </DateRow>
          <FormRow $h={25}>
            <Label>出货仓库</Label><Select w={91} text="仓库" fs={12} />
            <InfoBox>
              <SyncBox />
              <InfoLines><Mono>二-9.50</Mono><Mono>二-364.50</Mono></InfoLines>
              <NewTag>[新建]</NewTag>
            </InfoBox>
          </FormRow>
          <FormRow $h={25}><Label>客商名称</Label><Drop w={242} text="零售" fs={14} h={18} /></FormRow>
          <FormRow $h={26}><Label>客商机构</Label><Select w={91} text="零售" fs={14} /><Label $ml={7}>联系电话</Label><Drop w={89} h={17} /></FormRow>
          <FormRow $h={27}><Label>业 务 员</Label><Select w={91} text="陈科峰" fs={14} /><Label $ml={7}>销售价格</Label><Select w={89} text="零售价" fs={14} /></FormRow>
          <FormRow $h={26}><Label>技 术 员</Label><Select w={91} /><Label $ml={7}>关联单号</Label><Drop w={89} /></FormRow>
          <FormRow $h={27}><Label>收款账号</Label><Select w={91} text="未结款" fs={12} /><Label $ml={7}>实收金额</Label><Field $w={89} $h={18}><Mono>0.00</Mono></Field></FormRow>
          <FormRow $h={26}>
            <Label>优惠冲减</Label>
            <Field $w={42} $h={18}><Mono>0.00</Mono></Field>
            <Field $w={48} $h={20} $ml={0}><ClipValue>10.00</ClipValue><Spinner /></Field>
            <Label $ml={8}>欠款期限</Label><Field $w={89} $h={18}><FieldText><Mono>2015-08-13</Mono></FieldText><DropCap /></Field>
          </FormRow>
          <FormRow $h={26}><Label>摘　　要</Label><Field $w={242} $h={18} /></FormRow>
          <FormRow $h={26}><Label>提货方式</Label><Select w={91} text="自提" fs={14} /><Label $ml={7}>累计欠款</Label><Field $w={91} $h={18} $ml={-2}><Mono>0.00</Mono></Field></FormRow>
        </Form>

        <GridColumn>
          <GridWrap>
            <GridTable>
              <colgroup>{COLS.map((w, i) => <col key={i} style={{ width: w }} />)}</colgroup>
              <thead>
                <tr>
                  <th><HeadSort width="8" height="14" viewBox="0 0 8 14"><path d="M1 6h6l-3 4z" /></HeadSort></th>
                  <HeadSign>+</HeadSign><HeadSign>−</HeadSign><th>仓库名称</th><th>品名规格</th><th>单位</th><th>数量</th><th>单价</th><th>金额</th><th>保修说明</th>
                  <HeadRight>备</HeadRight>
                </tr>
              </thead>
              <tbody>
                {Array.from({ length: 14 }, (_, i) => (
                  <tr key={i}>
                    <RowNum $blank={i === 13}>{i < 13 ? i + 1 : ''}{i === 0 && <Arrow />}</RowNum>
                    <td>{i < 13 && <CellIcon $faded={i > 0}><Plus /></CellIcon>}</td>
                    <td>{i < 13 && <CellIcon $faded={i > 0}><Minus /></CellIcon>}</td>
                    <td />
                    <td>{i < 13 && <CellRightIcon $faded={i > 0}><DownBlue /></CellRightIcon>}</td>
                    <td /><td />
                    <td>{i < 13 && <DropTri $faded={i > 0} />}</td>
                    <td /><td /><td />
                  </tr>
                ))}
              </tbody>
              <tfoot>
                <tr>
                  <RowNum>13</RowNum><td /><td /><td /><td>合计</td><td /><TotalNum>0</TotalNum><td /><TotalNum>0</TotalNum><td /><td />
                </tr>
              </tfoot>
            </GridTable>
            <VScroll><TriUp /><ThumbV><Grip /></ThumbV><TriDown /></VScroll>
          </GridWrap>
          <HScroll><HArrow $dir="l" /><ThumbH><GripH /></ThumbH><Grow /><HArrow $dir="r" /></HScroll>
          <Foot>
            <FootText $ml={6}>应收</FootText><FootZero $ml={5} $c="#1430d0">0</FootZero>
            <FootIcon $ml={41}><SearchDisc /></FootIcon>
            <FootText $ml={5}>收银</FootText>
            <FootInput $w={51} $ml={8} />
            <FootText $ml={9}>找零</FootText>
            <FootInput $w={42} $ml={4}><Mono>0</Mono></FootInput>
            <FootText $ml={12}>F4定位</FootText>
            <FootInput $w={136} $ml={5}>会员卡号、商品条码或序</FootInput>
            <FootText $ml={4} $c="#e81010">0位</FootText>
          </Foot>
        </GridColumn>
      </Main>

      <Splitter><SplitDots /></Splitter>
      <PaneTabs>
        <PaneTab $w={65} $on>报表预览</PaneTab>
        <PaneTab $w={77}>收付款过程</PaneTab>
        <PaneTab $w={65}>原始单据</PaneTab>
      </PaneTabs>
      <PaneBody>
        <Side>
          <SideBtn $h={24} $fs={14}>查看审核流程</SideBtn>
          <SideBtn $h={36} $fs={14}><Chat />批注</SideBtn>
          <SideBtn $h={23}><CameraIcon />保存并打印</SideBtn>
          <SideBtn $h={23}><CameraIcon />立即打印</SideBtn>
          <SideBtn $h={23} $mb={0}><CameraIcon />刷新报表</SideBtn>
          <SideCheck><CheckBox s={15} />实时刷新报表</SideCheck>
          <ReportList>
            {REPORTS.map((r, i) => <ReportItem key={i} $on={i === 2}>{r}</ReportItem>)}
          </ReportList>
        </Side>
        <ReportColumn>
          <ReportRow>
            <ReportArea>
              <Page>
                <PageTop><PageTitle>图远软件销售单</PageTitle><PageNo>第1页 / 共1页</PageNo></PageTop>
                <PageInfo><PageLeft>客户：<b>陈科峰</b></PageLeft><span>支付方式：未结款</span></PageInfo>
                <PageInfo>
                  <PageLeft>时间：<PageMono $ml={6} $w={180}>2015-08-13&nbsp;&nbsp;21:35:14</PageMono><PageMono>NO: XK-150813-108-015</PageMono></PageLeft>
                  <span>累记欠款：<PageMono>0</PageMono></span>
                </PageInfo>
                <PrintTable>
                  <colgroup><col style={{ width: 224 }} /><col style={{ width: 29 }} /><col style={{ width: 54 }} /><col style={{ width: 59 }} /><col /></colgroup>
                  <tbody>
                    <PrintHeadRow><td>品 名 规 格</td><PrintQtyHead>数量</PrintQtyHead><td>单 价</td><td>金 额</td><td>备 注</td></PrintHeadRow>
                    {PRINT.map((p) => (
                      <tr key={p}><PrintName>{p}</PrintName><PrintVal>1</PrintVal><PrintVal>0</PrintVal><PrintVal>0</PrintVal><td /></tr>
                    ))}
                  </tbody>
                </PrintTable>
                <PageFoot>
                  <PageFootCell $w={128}>新数码广场K311</PageFootCell>
                  <PageFootCell $w={117}>电话：<PageMono $s={11.5}>6215650</PageMono></PageFootCell>
                  <PageFootCell $w={117}><PageMono $s={11.5}>18607234446</PageMono></PageFootCell>
                  <PageFootCell $w={75} $b>合计：</PageFootCell>
                  <PageFootCell $w={40} $b>0&nbsp;&nbsp;元</PageFootCell>
                </PageFoot>
              </Page>
            </ReportArea>
            <ReportScroll><ScrollCap><TriUp $m="0" /></ScrollCap></ReportScroll>
          </ReportRow>
          <Pager><PagerText>页 1/1</PagerText><PagerBtn /></Pager>
        </ReportColumn>
      </PaneBody>
      <DocTabs>
        <DocDrop />
        <DocTab>功能导航<DocClose>×</DocClose></DocTab>
        <DocTab $on>销售开单<DocClose>×</DocClose></DocTab>
      </DocTabs>
      <Status>
        <StatusCell $w={188} $pl={7}>7.0.4.3(时间:2016-07-27 10:07:56)</StatusCell>
        <StatusCell $w={152} $pl={26}>连接127.0.0.1成功</StatusCell>
        <StatusCell $w={224} $pl={22}>日期：2017年04月10日 周一 下午</StatusCell>
        <StatusCell $w={879} $pl={367}>程序运行了0小时3分钟10秒</StatusCell>
        <StatusEnd>平均速度1443.5</StatusEnd>
      </Status>

      <UploadBadge>
        <UploadIcon><UploadCloud /></UploadIcon>
        <UploadText>拖拽上传</UploadText>
      </UploadBadge>

      <SideTextClip>累计</SideTextClip>
      <Reminder>
        <ReminderHead>每日提醒<RedX s={24} /></ReminderHead>
        <ReminderFrame>
          <ReminderTitle>每日提醒</ReminderTitle>
          <ReminderTable>
            <colgroup><col style={{ width: 39 }} /><col style={{ width: 37 }} /><col style={{ width: 129 }} /><col /></colgroup>
            <thead><tr><th>序号</th><th>笔数</th><th>摘要</th><th>操作</th></tr></thead>
            <tbody>
              {REMIND.map(([n, c, d], i) => (
                <tr key={n}>
                  <ReminderSeq><SeqInner><Coin />{n}</SeqInner></ReminderSeq>
                  <td><Mono $s={13.5}>{c}</Mono></td>
                  <ReminderDesc>{d}</ReminderDesc>
                  <td><OpenLink $v={i === 0}>打开</OpenLink></td>
                </tr>
              ))}
            </tbody>
          </ReminderTable>
        </ReminderFrame>
      </Reminder>
      <Watermark>
        <WmLogo />
        <WmText><WmBig>巴士下载</WmBig><WmSmall>www.11684.com</WmSmall></WmText>
      </Watermark>
    </Root>
  );
}
